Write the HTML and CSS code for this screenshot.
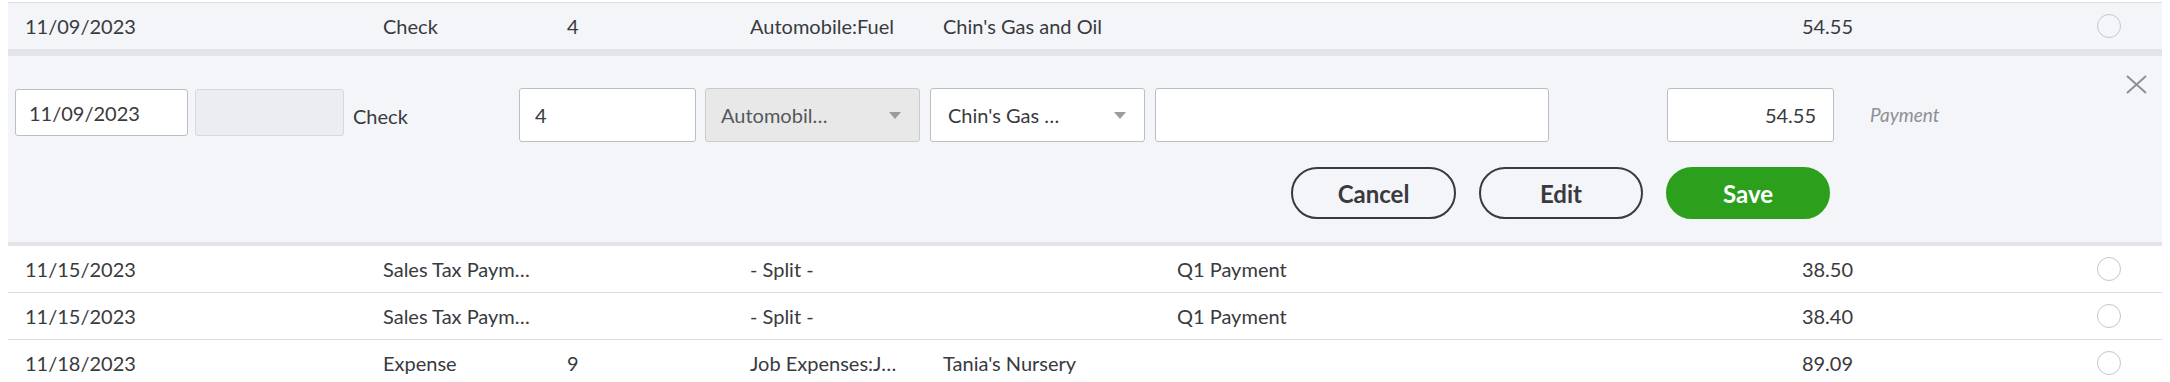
FILE: index.html
```html
<!DOCTYPE html>
<html lang="en">
<head>
<meta charset="utf-8">
<title>Register</title>
<link rel="stylesheet" href="styles.css">
</head>
<body>
<div class="register">
  <div class="row row-active">
    <span>11/09/2023</span>
    <span>Check</span>
    <span>4</span>
    <span>Automobile:Fuel</span>
    <span>Chin's Gas and Oil</span>
    <span></span>
    <span class="amt">54.55</span>
    <span class="radio"></span>
  </div>

  <div class="editor">
    <button class="close" type="button" aria-label="Close">
      <svg width="21" height="19" viewBox="0 0 21 19"><path d="M1 1 L20 18 M20 1 L1 18" stroke="#8d9096" stroke-width="2" fill="none"/></svg>
    </button>
    <div class="fields">
      <input class="field f-date" type="text" value="11/09/2023">
      <div class="field f-blank"></div>
      <span class="f-label">Check</span>
      <input class="field f-num" type="text" value="4">
      <div class="field select f-account disabled"><span>Automobil…</span><span class="caret"></span></div>
      <div class="field select f-payee"><span>Chin's Gas …</span><span class="caret"></span></div>
      <input class="field f-memo" type="text" value="">
      <input class="field f-amount" type="text" value="54.55">
      <span class="f-kind">Payment</span>
    </div>
    <div class="actions">
      <button class="btn" type="button">Cancel</button>
      <button class="btn" type="button">Edit</button>
      <button class="btn btn-primary" type="button">Save</button>
    </div>
  </div>

  <div class="row">
    <span>11/15/2023</span>
    <span>Sales Tax Paym…</span>
    <span></span>
    <span>- Split -</span>
    <span></span>
    <span>Q1 Payment</span>
    <span class="amt">38.50</span>
    <span class="radio"></span>
  </div>
  <div class="row">
    <span>11/15/2023</span>
    <span>Sales Tax Paym…</span>
    <span></span>
    <span>- Split -</span>
    <span></span>
    <span>Q1 Payment</span>
    <span class="amt">38.40</span>
    <span class="radio"></span>
  </div>
  <div class="row">
    <span>11/18/2023</span>
    <span>Expense</span>
    <span>9</span>
    <span>Job Expenses:J…</span>
    <span>Tania's Nursery</span>
    <span></span>
    <span class="amt">89.09</span>
    <span class="radio"></span>
  </div>
</div>
</body>
</html>
```

FILE: styles.css
```css
* { box-sizing: border-box; }

html, body {
  background: #ffffff;
}

body {
  margin: 0 8px;
  padding-top: 2px;
  font-family: Lato, "Open Sans", sans-serif;
  color: #393a3d;
  overflow: hidden;
}

.register {
  border-top: 1px solid #dedfe2;
}

.row {
  display: grid;
  grid-template-columns: 358px 184px 183px 193px 234px 523px 153px 1fr 24px 41px;
  align-items: center;
  height: 47px;
  padding-left: 17px;
  border-bottom: 1px solid #dcdde0;
  font-size: 20px;
  background: #ffffff;
  white-space: nowrap;
}

.row-active {
  height: 46px;
  background: #f4f5f8;
  border-bottom: none;
}

.amt {
  text-align: right;
}

.radio {
  grid-column: 9;
  width: 24px;
  height: 24px;
  border: 1px solid #c4c6ca;
  border-radius: 50%;
  background: #ffffff;
}

.row-active .radio {
  background: transparent;
}

.editor {
  position: relative;
  height: 197px;
  padding-left: 7px;
  background: #f4f5f8;
  border-top: 7px solid #e3e4e8;
  border-bottom: 4px solid #e3e4e8;
}

.close {
  position: absolute;
  top: 19px;
  right: 15px;
  width: 21px;
  height: 19px;
  padding: 0;
  border: none;
  background: none;
  display: flex;
}

.fields {
  display: flex;
  align-items: flex-start;
  padding-top: 32px;
}

.field {
  height: 54px;
  border: 1px solid #babec5;
  border-radius: 3px;
  background: #ffffff;
  font-family: inherit;
  font-size: 20px;
  color: #393a3d;
  padding: 0 15px;
  margin: 0;
  outline: none;
}

.f-date {
  width: 173px;
  height: 47px;
  margin-top: 1px;
  padding-left: 13px;
}

.f-blank {
  width: 149px;
  height: 47px;
  margin-top: 1px;
  margin-left: 7px;
  background: #ecedf0;
  border-color: #d6d8dc;
}

.f-label {
  width: 166px;
  margin-left: 9px;
  margin-top: 16px;
  font-size: 20px;
  line-height: 24px;
}

.f-num {
  width: 177px;
}

.select {
  display: flex;
  align-items: center;
  justify-content: space-between;
  white-space: nowrap;
}

.caret {
  width: 0;
  height: 0;
  margin-right: 3px;
  border-left: 6px solid transparent;
  border-right: 6px solid transparent;
  border-top: 7px solid #9a9ca1;
}

.f-account {
  width: 215px;
  margin-left: 9px;
  background: #e8e8e9;
  border-color: #c9cbcf;
  color: #55575c;
}

.f-payee {
  width: 215px;
  margin-left: 10px;
  padding-left: 17px;
}

.f-memo {
  width: 394px;
  margin-left: 10px;
}

.f-amount {
  width: 167px;
  margin-left: 118px;
  text-align: right;
  padding-right: 17px;
}

.f-kind {
  margin-left: 36px;
  margin-top: 15px;
  font-size: 19px;
  line-height: 24px;
  font-style: italic;
  color: #8d9096;
}

.actions {
  display: flex;
  justify-content: flex-end;
  gap: 23px;
  margin-top: 25px;
  padding-right: 332px;
}

.btn {
  width: 164px;
  height: 52px;
  border: 2px solid #393a3d;
  border-radius: 26px;
  background: transparent;
  font-family: inherit;
  font-size: 24px;
  font-weight: 700;
  color: #393a3d;
  padding: 0;
}

.btn:first-child {
  width: 165px;
}

.btn-primary {
  background: #2ca01c;
  border-color: #2ca01c;
  color: #ffffff;
}
```
